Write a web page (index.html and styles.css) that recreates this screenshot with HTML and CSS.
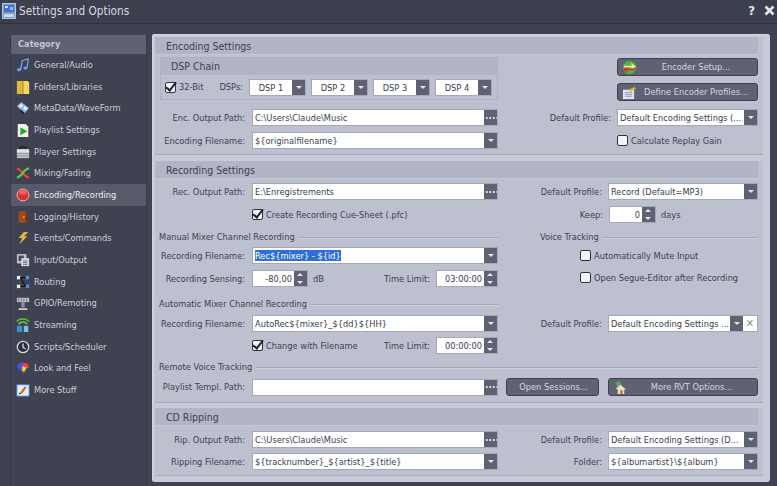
FILE: index.html
```html
<!DOCTYPE html>
<html lang="en">
<head>
<meta charset="utf-8">
<title>Settings and Options</title>
<link rel="stylesheet" href="styles.css">
</head>
<body>
<header class="titlebar">
  <svg class="app-icon" viewBox="0 0 14 16" width="14" height="16"><rect x=".5" y=".5" width="13" height="15" fill="#6f9fe0" stroke="#b9c4d8"/><rect x="2" y="2" width="10" height="7" fill="#3f72c4"/><rect x="3" y="3" width="3" height="2" fill="#cfe2f8"/><rect x="8" y="4" width="3" height="3" fill="#9cc0ee"/><path d="M2 11h10v3H2z" fill="#d8d4c8"/></svg>
  <span class="title">Settings and Options</span>
  <span class="title-actions"><span class="help">?</span><svg class="close" viewBox="0 0 11 11" width="11" height="11"><path d="M1.500 1.500l8 8M9.500 1.500l-8 8" stroke="#e6e8ee" stroke-width="2.600"/></svg></span>
</header>
<div class="workspace">
  <nav class="sidebar">
    <div class="side-head">Category</div>
    <ul class="side-list">
      <li class="side-item"><svg viewBox="0 0 16 16"><path d="M5.500 13L7 3l7-2-1.200 10" fill="none" stroke="#7aa4ea" stroke-width="1.400"/><ellipse cx="3.500" cy="13.300" rx="2.500" ry="1.900" fill="#6b9cf0"/><ellipse cx="10.800" cy="11.500" rx="2.400" ry="1.800" fill="#6b9cf0"/></svg>General/Audio</li>
      <li class="side-item"><svg viewBox="0 0 16 16"><path d="M1 1h12l2 2v13H1z" fill="#e2b63c"/><path d="M8 1h5l2 2v13H8z" fill="#f4d766"/><path d="M8 1v15" stroke="#a97f1c"/></svg>Folders/Libraries</li>
      <li class="side-item"><svg viewBox="0 0 16 16"><path d="M1 6l5-5 9 7-5 6z" fill="#8fb2e4"/><path d="M3 6l3-3 2 2-3 3zM8 8l2-2 3 2-2 3z" fill="#f0f4fa"/><path d="M4 12l2-2 4 4-2 1z" fill="#222733"/></svg>MetaData/WaveForm</li>
      <li class="side-item"><svg viewBox="0 0 16 16"><path d="M2 1h9l3 3v12H2z" fill="#f0f0f0"/><path d="M5 5l8 4.500-8 4.500z" fill="#27a52d"/></svg>Playlist Settings</li>
      <li class="side-item"><svg viewBox="0 0 16 16"><path d="M5 5V2.500h6V5" fill="none" stroke="#1c1e26" stroke-width="1.500"/><rect x="1" y="5" width="14" height="10" fill="#c5c7cc"/><rect x="1" y="5" width="14" height="4" fill="#e4e5e8"/><path d="M1 9.500h14M1 12.500h14" stroke="#85878f"/></svg>Player Settings</li>
      <li class="side-item"><svg viewBox="0 0 16 16"><path d="M1 3c6 0 7 10 14 10" fill="none" stroke="#e54b2c" stroke-width="2.500"/><path d="M1 13c6 0 7-10 14-10" fill="none" stroke="#5fc84a" stroke-width="2.500"/></svg>Mixing/Fading</li>
      <li class="side-item is-active"><svg viewBox="0 0 16 16"><circle cx="8" cy="8" r="6.800" fill="#e22c30" stroke="#e8c8c4"/><ellipse cx="8" cy="5" rx="4" ry="2.500" fill="#f46a66"/></svg>Encoding/Recording</li>
      <li class="side-item"><svg viewBox="0 0 16 16"><path d="M3 2l8-1v14l-8-1z" fill="#a6491f"/><path d="M11 2h3v12h-3z" fill="#6e3a22"/><circle cx="9" cy="8" r="1" fill="#f0c060"/></svg>Logging/History</li>
      <li class="side-item"><svg viewBox="0 0 16 16"><path d="M9 1h5L9 6h4l-9 9 3-7H3z" fill="#e8b63a"/></svg>Events/Commands</li>
      <li class="side-item"><svg viewBox="0 0 16 16"><rect x="1" y="1" width="11" height="11" rx="1" fill="#b9bdc8"/><rect x="3" y="3" width="6" height="6" fill="#444a5c"/><rect x="6" y="6" width="9" height="9" fill="#d7dae2"/><path d="M8 9h5M8 11h5M8 13h5" stroke="#60657a"/></svg>Input/Output</li>
      <li class="side-item"><svg viewBox="0 0 16 16"><rect x="1" y="1" width="4" height="4" fill="#e8e8e8"/><rect x="1" y="11" width="4" height="4" fill="#e8e8e8"/><rect x="11" y="1" width="4" height="4" fill="#4d8ce8"/><rect x="11" y="11" width="4" height="4" fill="#4d8ce8"/><path d="M5 3h6M5 13h6M5 3l6 10" stroke="#11131a" stroke-width="1.200"/></svg>Routing</li>
      <li class="side-item"><svg viewBox="0 0 16 16"><path d="M1 2h14v5H1z" fill="#b9bdc4"/><path d="M6 7h4v6H6z" fill="#8d9099"/><path d="M3 14h10v2H3z" fill="#c9ccd2"/><path d="M3 3v3M6 3v3M9 3v3M12 3v3" stroke="#666a74"/></svg>GPIO/Remoting</li>
      <li class="side-item"><svg viewBox="0 0 16 16"><path d="M1 4c3-4 10-4 14 0" fill="none" stroke="#56b83c" stroke-width="2"/><path d="M3 7c3-3 7-3 10 0" fill="none" stroke="#76c854" stroke-width="2"/><rect x="1" y="9" width="6" height="7" fill="#3f8fc8"/><rect x="9" y="9" width="5" height="7" fill="#7fc0e8"/></svg>Streaming</li>
      <li class="side-item"><svg viewBox="0 0 16 16"><circle cx="8" cy="8" r="6.500" fill="#2c2f38" stroke="#d5d7dc" stroke-width="1.500"/><path d="M8 4v4.500l3 1.500" fill="none" stroke="#f0f0f0" stroke-width="1.300"/></svg>Scripts/Scheduler</li>
      <li class="side-item"><svg viewBox="0 0 16 16"><path d="M1 7c1-4 5-5 7-5s6 1 7 5l-4 1-2 5-3-1-1-3z" fill="#c32cd0"/><path d="M1 7c1-3 3-4 5-5l1 9-3-1z" fill="#2a5ee8"/><path d="M9 2c2 0 5 1 6 5l-5 3z" fill="#e8462c"/><path d="M7 6l5 1-2 5-3-1z" fill="#f0d02c"/><path d="M8 11l2 0-1 4z" fill="#30c040"/></svg>Look and Feel</li>
      <li class="side-item"><svg viewBox="0 0 16 16"><rect x="1" y="2" width="14" height="13" fill="#e8ecf4" stroke="#4a7bd0"/><path d="M4 12l6-8 2 1-5 7z" fill="#c86420"/><path d="M3 13l3-1-2-1z" fill="#222"/></svg>More Stuff</li>
    </ul>
  </nav>
  <main class="panel">
    <section class="section">
      <h2 class="section-title">Encoding Settings</h2>
      <div class="enc-top">
        <div class="group">
          <h3 class="group-title">DSP Chain</h3>
          <div class="group-row">
            <label class="check"><span class="box is-checked"></span>32-Bit</label>
            <span class="dsp-label">DSPs:</span>
            <span class="combo dsp"><span class="val center">DSP 1</span><span class="arrow"></span></span>
            <span class="combo dsp"><span class="val center">DSP 2</span><span class="arrow"></span></span>
            <span class="combo dsp"><span class="val center">DSP 3</span><span class="arrow"></span></span>
            <span class="combo dsp"><span class="val center">DSP 4</span><span class="arrow"></span></span>
          </div>
        </div>
        <div class="enc-buttons">
          <button class="btn"><svg class="btn-icon" viewBox="0 0 16 16"><circle cx="8" cy="8" r="7" fill="#58b040"/><path d="M2 6h9l-2-3 6 4-6 3 2-2H3z" fill="#f4f0a0"/><path d="M14 11H5l2 3-6-4 6-3-2 2h8z" fill="#d83020"/></svg><span class="btn-text">Encoder Setup...</span></button>
          <button class="btn"><svg class="btn-icon" viewBox="0 0 16 16"><rect x="1" y="5" width="12" height="10" fill="#dfe6f2"/><path d="M3 8h8M3 10h8M3 12h8" stroke="#8a9ab8"/><path d="M7 5l6-3 2 2-6 3z" fill="#e0b030"/></svg><span class="btn-text">Define Encoder Profiles...</span></button>
        </div>
      </div>
      <div class="row r-encpath">
        <div class="left"><span class="lab">Enc. Output Path:</span><span class="combo grow"><span class="val">C:\Users\Claude\Music</span><span class="dots"></span></span></div>
        <div class="right"><span class="rlab">Default Profile:</span><span class="combo prof-wide"><span class="val">Default Encoding Settings (...</span><span class="arrow"></span></span></div>
      </div>
      <div class="row r-encfile">
        <div class="left"><span class="lab">Encoding Filename:</span><span class="combo grow"><span class="val">${originalfilename}</span><span class="arrow"></span></span></div>
        <div class="right"><label class="check replay"><span class="box"></span>Calculate Replay Gain</label></div>
      </div>
    </section>

    <section class="section">
      <h2 class="section-title">Recording Settings</h2>
      <div class="row r-recpath">
        <div class="left"><span class="lab">Rec. Output Path:</span><span class="combo grow"><span class="val">E:\Enregistrements</span><span class="dots"></span></span></div>
        <div class="right"><span class="rlab">Default Profile:</span><span class="combo prof"><span class="val">Record (Default=MP3)</span><span class="arrow"></span></span></div>
      </div>
      <div class="row r-cue">
        <div class="left"><span class="lab"></span><label class="check"><span class="box is-checked"></span>Create Recording Cue-Sheet (.pfc)</label></div>
        <div class="right"><span class="rlab">Keep:</span><span class="spin keep"><span class="val right-text">0</span><span class="updown"></span></span><span class="unit">days</span></div>
      </div>
      <div class="row r-heads">
        <div class="left head-line">Manual Mixer Channel Recording</div>
        <div class="right head-line voice">Voice Tracking</div>
      </div>
      <div class="row r-manual">
        <div class="left"><span class="lab">Recording Filename:</span><span class="combo grow"><span class="val"><span class="sel">Rec${mixer} - ${id}</span></span><span class="arrow"></span></span></div>
        <div class="right opt"><label class="check"><span class="box"></span>Automatically Mute Input</label></div>
      </div>
      <div class="row r-sense">
        <div class="left"><span class="lab">Recording Sensing:</span><span class="spin sense"><span class="val right-text">-80,00</span><span class="updown"></span></span><span class="unit">dB</span><span class="limit-lab">Time Limit:</span><span class="spin time"><span class="val right-text">03:00:00</span><span class="updown"></span></span></div>
        <div class="right opt segue"><label class="check"><span class="box"></span>Open Segue-Editor after Recording</label></div>
      </div>
      <div class="row r-autohead">
        <div class="left head-line">Automatic Mixer Channel Recording</div>
      </div>
      <div class="row r-auto">
        <div class="left"><span class="lab">Recording Filename:</span><span class="combo grow"><span class="val">AutoRec${mixer}_${dd}${HH}</span><span class="arrow"></span></span></div>
        <div class="right"><span class="rlab">Default Profile:</span><span class="combo prof"><span class="val">Default Encoding Settings ...</span><span class="arrow"></span><span class="clear">✕</span></span></div>
      </div>
      <div class="row r-change">
        <div class="left"><span class="lab"></span><label class="check"><span class="box is-checked"></span>Change with Filename</label><span class="limit-lab">Time Limit:</span><span class="spin time"><span class="val right-text">00:00:00</span><span class="updown"></span></span></div>
      </div>
      <div class="row r-remotehead">
        <div class="full head-line">Remote Voice Tracking</div>
      </div>
      <div class="row r-remote">
        <div class="left"><span class="lab">Playlist Templ. Path:</span><span class="combo grow"><span class="val"></span><span class="dots"></span></span></div>
        <div class="right sessions"><button class="btn open"><span class="btn-text">Open Sessions...</span></button><button class="btn rvt"><svg class="btn-icon" viewBox="0 0 16 16"><path d="M2 3l5-2 3 5-5 2z" fill="#58a860"/><path d="M3 9l5-4 6 5h-2v5H5v-5z" fill="#ecdcc0"/><rect x="8" y="11" width="2" height="4" fill="#b05a20"/></svg><span class="btn-text">More RVT Options...</span></button></div>
      </div>
    </section>

    <section class="section last">
      <h2 class="section-title">CD Ripping</h2>
      <div class="row r-rip">
        <div class="left"><span class="lab">Rip. Output Path:</span><span class="combo grow"><span class="val">C:\Users\Claude\Music</span><span class="dots"></span></span></div>
        <div class="right"><span class="rlab">Default Profile:</span><span class="combo prof"><span class="val">Default Encoding Settings (D...</span><span class="arrow"></span></span></div>
      </div>
      <div class="row r-ripfile">
        <div class="left"><span class="lab">Ripping Filename:</span><span class="combo grow"><span class="val">${tracknumber}_${artist}_${title}</span><span class="arrow"></span></span></div>
        <div class="right"><span class="rlab">Folder:</span><span class="combo prof"><span class="val">${albumartist}\${album}</span><span class="arrow"></span></span></div>
      </div>
    </section>
  </main>
</div>
</body>
</html>
```

FILE: styles.css
```css
* { box-sizing: border-box; }
html, body { margin: 0; height: 100%; }
body {
  width: 777px; height: 486px; overflow: hidden;
  background: #3f4250;
  font: 9.200px/14px "DejaVu Sans", "Liberation Sans", sans-serif;
  font-stretch: condensed;
  color: #3d4052;
}
.titlebar {
  height: 24px; display: flex; align-items: center; padding: 0 2px 2px 2px;
  background: #3c3f4d; border-bottom: 1px solid #30323e;
  color: #d8dae2; font-size: 11.700px;
}
.app-icon { flex: none; margin-right: 3px; }
.title { flex: 1; }
.title-actions { display: flex; align-items: center; gap: 9px; }
.help { font-weight: 700; font-size: 13px; color: #e6e8ee; }
.workspace { display: flex; height: 462px; padding: 10px 0 0 10px; }
.sidebar {
  flex: none; width: 137px; margin-top: 1px; border: solid #373945; border-width: 0 1px;
  background: #3f4250; color: #cdcfd9;
}
.side-head {
  height: 19px; background: #5e6272; color: #c3c6d2; font-weight: 700;
  padding: 2px 0 0 7px;
}
.side-list { list-style: none; margin: 0; padding: 0; }
.side-item {
  height: 21.700px; display: flex; align-items: center; gap: 4px; padding-left: 5px;
}
.side-item svg { width: 14px; height: 14px; flex: none; }
.is-active { background: #575a69; color: #eceef4; }
.panel {
  flex: none; width: 618px; height: 448px; margin-left: 5px;
  background: #c7cad7; border-radius: 3px; padding: 3px 7px 0 3px;
  box-shadow: inset 1px 1px 0 #d3d6e0;
}
.section {
  width: 608px; height: 118px; background: #bdc0cf;
  padding: 0 5px 0 0; border-bottom: 1px solid #a9acbc;
}
.section + .section { height: 242px; margin-top: 6px; }
.section.last { height: 68px; margin-top: 5px; }
.section-title {
  margin: 0; height: 18px; padding: 1px 0 0 11px; background: #b2b5c6;
  font-weight: 400; font-size: 10.500px; line-height: 16px;
  border-bottom: 1px solid #c5c8d5;
}
.enc-top { display: flex; justify-content: space-between; padding: 2px 0 0 5px; height: 48px; }
.group { width: 338px; height: 43px; border: 1px solid #aeb1c1; }
.group-title {
  margin: 0; height: 17px; padding: 1px 0 0 10px; background: #b2b5c6;
  font-weight: 400; font-size: 10.500px; line-height: 15px;
}
.group-row { display: flex; align-items: center; height: 24px; padding-left: 4px; }
.check { display: inline-flex; align-items: center; gap: 3px; white-space: nowrap; }
.box {
  width: 11px; height: 11px; flex: none; background: #f4f5f8; border: 1.500px solid #2f3140;
  border-radius: 2px; position: relative;
}
.box.is-checked::after {
  content: ""; position: absolute; left: 2px; top: -3px; width: 4px; height: 9px;
  border: solid #20222c; border-width: 0 2px 2px 0; transform: rotate(38deg);
}
.dsp-label { width: 44px; text-align: right; margin-right: 6px; }
.combo, .spin {
  display: flex; height: 17px; background: #fff; border: 1px solid #a5a8b8;
  overflow: hidden; flex: none; color: #3a3c4c;
}
.grow { width: 246px; }
.dsp { width: 57px; margin-right: 5px; }
.val { flex: 1; min-width: 0; padding: 0 0 0 2px; line-height: 15px; white-space: nowrap; overflow: hidden; }
.center { text-align: center; padding: 0; }
.right-text { text-align: right; padding: 0 2px 0 0; }
.arrow, .dots, .updown { width: 13px; flex: none; background-color: #5e6272; position: relative; }
.arrow::after {
  content: ""; position: absolute; left: 4px; top: 6px;
  border: 3px solid transparent; border-top: 3px solid #e4e6ee; border-bottom: 0;
}
.dots {
  background-image: radial-gradient(circle at center, #e4e6ee 1px, transparent 1.200px);
  background-size: 3.500px 4px; background-position: 1px center; background-repeat: repeat-x;
}
.updown::before, .updown::after { content: ""; position: absolute; left: 3px; border: 3.500px solid transparent; }
.updown::before { top: 2px; border-bottom-color: #e4e6ee; border-top: 0; }
.updown::after { bottom: 2px; border-top-color: #e4e6ee; border-bottom: 0; }
.row { display: flex; }
.left { width: 343px; display: flex; align-items: center; flex: none; }
.lab { width: 97px; text-align: right; padding-right: 7px; flex: none; white-space: nowrap; }
.right { flex: 1; min-width: 0; margin-left: 3px; display: flex; align-items: center; justify-content: flex-end; }
.rlab { margin-right: 6px; white-space: nowrap; }
.prof { width: 150px; }
.prof-wide { width: 141px; }
.enc-buttons { display: flex; flex-direction: column; gap: 7px; margin-top: 1px; width: 141px; }
.btn {
  display: flex; align-items: center; height: 18px; padding: 0 2px 0 4px; width: 100%;
  background: #5e6272; border: 1px solid #3e4150; border-radius: 3px;
  color: #d5d7e0; font: inherit;
}
.btn-icon { width: 15px; height: 15px; flex: none; }
.btn-text { flex: 1; text-align: center; white-space: nowrap; }
.r-encpath { margin-top: 6px; }
.r-encfile { margin-top: 6px; }
.replay { width: 141px; }
.r-recpath { margin-top: 4px; }
.r-cue { margin-top: 6px; }
.keep { width: 47px; }
.unit { margin-left: 5px; }
.r-cue .right { justify-content: flex-start; padding-left: 66px; }
.r-cue .rlab { width: 36px; text-align: right; }
.head-line { display: flex; align-items: center; gap: 4px; padding-left: 4px; white-space: nowrap; height: 14px; }
.head-line::after { content: ""; flex: 1; height: 1px; background: #a4a7b7; box-shadow: 0 1px 0 #cdd0da; }
.r-heads { margin-top: 7px; }
.voice { padding-left: 39px; justify-content: flex-start; }
.r-manual { margin-top: 3px; }
.opt { justify-content: flex-start; padding-left: 79px; }
.segue { padding-bottom: 2px; }
.r-sense { margin-top: 6px; }
.sense { width: 56px; }
.limit-lab { margin-left: auto; margin-right: 6px; }
.time { width: 62px; }
.r-autohead { margin-top: 10px; }
.r-auto { margin-top: 4px; }
.clear { width: 14px; flex: none; background: #fff; color: #8a8d9c; text-align: center; line-height: 15px; font-size: 11px; font-weight: 700; }
.r-change { margin-top: 5px; }
.r-remotehead { margin-top: 6px; }
.full { width: 100%; }
.r-remote { margin-top: 4px; }
.sessions { gap: 9px; }
.open { width: 93px; flex: none; }
.rvt { width: 150px; flex: none; }
.r-rip { margin-top: 5px; }
.r-ripfile { margin-top: 5px; }
.sel { background: #2f6fdc; color: #fff; }
```
